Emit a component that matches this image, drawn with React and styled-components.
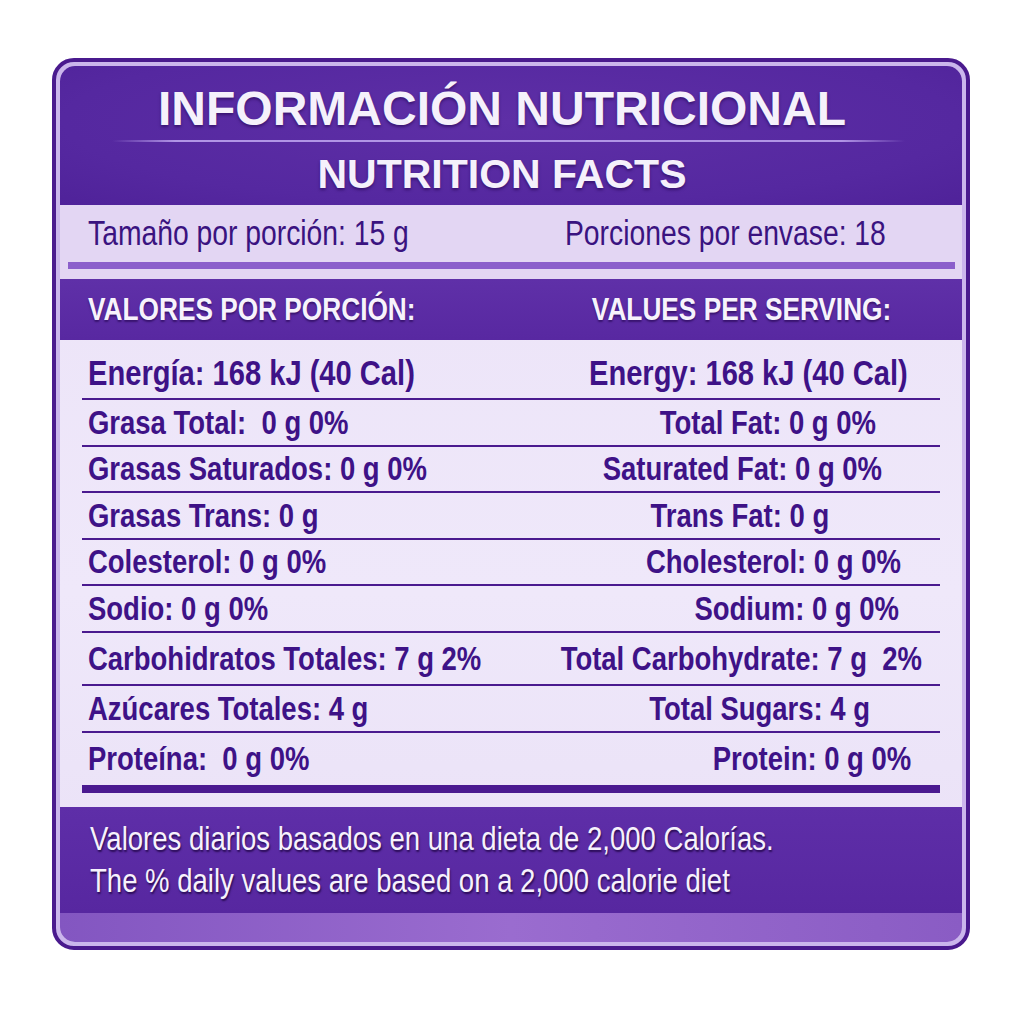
import React from "react";
import styled, { createGlobalStyle } from "styled-components";

const GlobalStyle = createGlobalStyle`
  html, body {
    margin: 0;
    background: #ffffff;
  }
  body {
    width: 1024px;
    height: 1024px;
  }
`;

const SANS = `"Liberation Sans", Arial, sans-serif`;

const Page = styled.div`
  padding: 58px 0 0 52px;
`;

const Card = styled.div`
  box-sizing: border-box;
  width: 918px;
  height: 892px;
  border: 4px solid #4a1a8e;
  border-radius: 22px;
  background: #cbb6ec;
  padding: 4px;
  display: flex;
`;

const Panel = styled.div`
  flex: 1;
  border-radius: 15px;
  overflow: hidden;
  background: linear-gradient(180deg, #ebe2f7 0%, #efe8fa 60%, #e9e0f6 100%);
  display: flex;
  flex-direction: column;
`;

// condensed lettering: the installed families have no narrow cut
const Narrow = styled.span`
  display: inline-block;
  white-space: pre;
  transform: scaleX(${(p) => p.$sx || 0.82});
  transform-origin: ${(p) => p.$origin || "left"} center;
`;

const Header = styled.div`
  box-sizing: border-box;
  height: 139px;
  padding: 17px 18px 8px 0;
  background: radial-gradient(ellipse at 50% 40%, #5e2fa6 0%, #5528a0 70%, #4f2299 100%);
  display: flex;
  flex-direction: column;
  align-items: center;
`;

const Title = styled.div`
  font-family: ${SANS};
  font-weight: 700;
  font-size: ${(p) => p.$size}px;
  line-height: ${(p) => p.$lh}px;
  margin-top: ${(p) => p.$mt || 0}px;
  color: #f5f1fb;
  white-space: nowrap;
  text-shadow: 0 2px 3px rgba(35, 5, 80, 0.6);
`;

const HeaderRule = styled.div`
  align-self: stretch;
  margin: 5px 39px 0 52px;
  height: 2px;
  background: linear-gradient(90deg, rgba(177, 149, 230, 0), #b195e6 8%, #b195e6 92%, rgba(177, 149, 230, 0));
`;

const Serving = styled.div`
  background: #e3d6f3;
  padding-top: 8px;
  display: flex;
  flex-direction: column;
`;

const ServingRow = styled.div`
  height: 40px;
  display: grid;
  grid-template-columns: 1fr 397px;
  padding-left: 28px;
  font-family: ${SANS};
  font-size: 34.5px;
  line-height: 40px;
  color: #3a1380;
  white-space: nowrap;
`;

const ServingRule = styled.div`
  margin: 9px 7px 10px 8px;
  height: 7px;
  background: #8b5fcb;
`;

const Band = styled.div`
  box-sizing: border-box;
  height: 61px;
  display: grid;
  grid-template-columns: 1fr 360px;
  align-items: center;
  padding: 0 42px 0 28px;
  background: linear-gradient(180deg, #5f30a8, #5828a1);
  font-family: ${SANS};
  font-weight: 700;
  font-size: 32px;
  color: #f7f3fc;
  white-space: nowrap;
  text-shadow: 0 2px 2px rgba(30, 0, 70, 0.55);
`;

const Rows = styled.div`
  padding: 0 22px;
  display: flex;
  flex-direction: column;
`;

const Row = styled.div`
  box-sizing: border-box;
  height: ${(p) => p.$h}px;
  padding: ${(p) => p.$pt || 0}px 20px 0 6px;
  display: grid;
  grid-template-columns: 1fr 360px;
  align-items: center;
  border-bottom: ${(p) => (p.$last ? "none" : "2px solid #4a1a8f")};
  font-family: ${SANS};
  font-weight: 700;
  font-size: ${(p) => p.$fs}px;
  color: #3e1287;
  white-space: pre;
`;

const LeftCell = styled.div`
  display: flex;
  min-width: 0;
`;

const RightCell = styled.div`
  display: flex;
  justify-content: center;
  min-width: 0;
  padding-left: ${(p) => p.$shift * 2}px;
`;

const ThickRule = styled.div`
  height: 8px;
  background: #4a1990;
  margin-bottom: 14px;
`;

const Footer = styled.div`
  box-sizing: border-box;
  height: 106px;
  padding: 11px 30px;
  background: linear-gradient(180deg, #5e2ea8, #5727a0);
  font-family: ${SANS};
  font-size: 33.6px;
  line-height: 42px;
  color: #f7f2fc;
  white-space: nowrap;
  text-shadow: 1px 2px 2px rgba(25, 0, 60, 0.75);
`;

const FooterLine = styled.div`
  display: flex;
`;

const BottomStrip = styled.div`
  flex: 1;
  background: linear-gradient(90deg, #8356c1, #9a6ccf 50%, #8a5cc4);
`;

const rows = [
  { es: "Energía: 168 kJ (40 Cal)", en: "Energy: 168 kJ (40 Cal)", shift: 8, h: 60, pt: 8, fs: 35.5 },
  { es: "Grasa Total:  0 g 0%", en: "Total Fat: 0 g 0%", shift: 28, h: 47 },
  { es: "Grasas Saturados: 0 g 0%", en: "Saturated Fat: 0 g 0%", shift: 2, h: 46 },
  { es: "Grasas Trans: 0 g", en: "Trans Fat: 0 g", shift: 0, h: 47 },
  { es: "Colesterol: 0 g 0%", en: "Cholesterol: 0 g 0%", shift: 33, h: 46 },
  { es: "Sodio: 0 g 0%", en: "Sodium: 0 g 0%", shift: 57, h: 47 },
  { es: "Carbohidratos Totales: 7 g 2%", en: "Total Carbohydrate: 7 g  2%", shift: 1, h: 53 },
  { es: "Azúcares Totales: 4 g", en: "Total Sugars: 4 g", shift: 20, h: 47 },
  { es: "Proteína:  0 g 0%", en: "Protein: 0 g 0%", shift: 72, h: 52, last: true },
];

export default function App() {
  return (
    <Page>
      <GlobalStyle />
      <Card>
        <Panel>
          <Header>
            <Title $size={48} $lh={52}>INFORMACIÓN NUTRICIONAL</Title>
            <HeaderRule />
            <Title $size={41} $lh={44} $mt={10}>NUTRITION FACTS</Title>
          </Header>
          <Serving>
            <ServingRow>
              <LeftCell>
                <Narrow>Tamaño por porción: 15 g</Narrow>
              </LeftCell>
              <LeftCell>
                <Narrow>Porciones por envase: 18</Narrow>
              </LeftCell>
            </ServingRow>
            <ServingRule />
          </Serving>
          <Band>
            <LeftCell>
              <Narrow>VALORES POR PORCIÓN:</Narrow>
            </LeftCell>
            <RightCell $shift={2}>
              <Narrow $origin="center">VALUES PER SERVING:</Narrow>
            </RightCell>
          </Band>
          <Rows>
            {rows.map((r) => (
              <Row key={r.en} $h={r.h} $pt={r.pt} $fs={r.fs || 33.5} $last={r.last}>
                <LeftCell>
                  <Narrow>{r.es}</Narrow>
                </LeftCell>
                <RightCell $shift={r.shift}>
                  <Narrow $origin="center">{r.en}</Narrow>
                </RightCell>
              </Row>
            ))}
            <ThickRule />
          </Rows>
          <Footer>
            <FooterLine>
              <Narrow>Valores diarios basados en una dieta de 2,000 Calorías.</Narrow>
            </FooterLine>
            <FooterLine>
              <Narrow>The % daily values are based on a 2,000 calorie diet</Narrow>
            </FooterLine>
          </Footer>
          <BottomStrip />
        </Panel>
      </Card>
    </Page>
  );
}
